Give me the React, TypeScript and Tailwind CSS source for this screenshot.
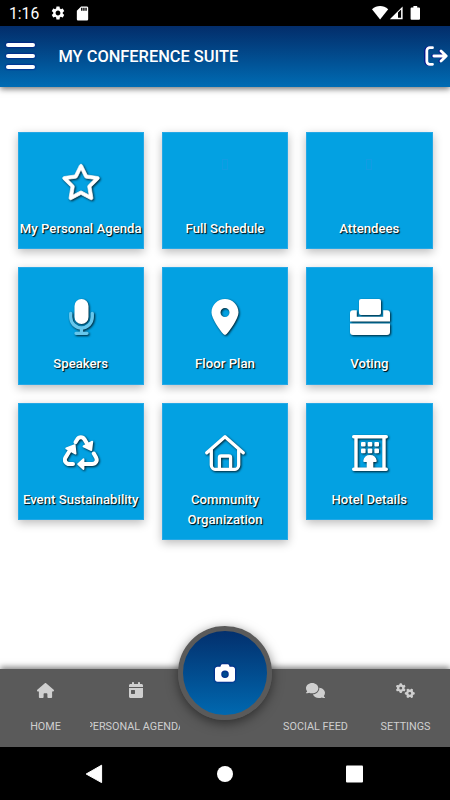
import React from 'react';
import {
  FaCalendarDay,
  FaCamera,
  FaComments,
  FaGears,
  FaHouse,
  FaLocationDot,
  FaRegStar,
} from 'react-icons/fa6';
import { MdSdCard, MdSettings } from 'react-icons/md';

interface Tile {
  label: string;
  icon?: React.ReactNode;
}

const MicrophoneIcon = () => (
  <svg width="25" height="36" viewBox="0 0 25 36" fill="none">
    <path
      d="M1.7 14.5v3.6a10.8 10.8 0 0 0 21.6 0v-3.6M12.5 29v5M7 34.3h11"
      stroke="#66c7ed"
      strokeWidth="3.3"
      strokeLinecap="round"
    />
    <rect x="5.5" y="0" width="14" height="25" rx="7" fill="white" />
  </svg>
);

const VotingIcon = () => (
  <svg width="40" height="36" viewBox="0 0 40 36" fill="white">
    <rect x="9" y="0" width="22" height="16" rx="2" />
    <path d="M3 11.2h3.8v6.6h26.4v-6.6H37a3 3 0 0 1 3 3v8.3H0v-8.3a3 3 0 0 1 3-3Z" />
    <path d="M0 24.4h40V33a3 3 0 0 1-3 3H3a3 3 0 0 1-3-3Z" />
  </svg>
);

const RecycleIcon = () => (
  <svg width="36" height="36" viewBox="0 0 36 36" fill="none">
    <g stroke="white" strokeWidth="4" strokeLinecap="round" strokeLinejoin="round">
      <path d="m12.5 7.3 1.7-2.9c1.7-2.8 5.7-2.8 7.3 0l3.8 6.3" />
      <path d="m30.8 18.6 2.3 4c1.7 3.2-.4 6.5-3.9 6.5H20" />
      <path d="M10 29.1H6.4c-3.5 0-5.6-3.5-3.9-6.5l4.9-8.1" />
    </g>
    <g fill="white" stroke="white" strokeWidth="1.8" strokeLinejoin="round">
      <path d="m29.3 6.6-1 8.5-7.8-3.7Z" />
      <path d="m20.5 24.2-5.4 4.9 5.4 4.9Z" />
      <path d="m3.2 13.4 8.5-3.2.9 8.5Z" />
    </g>
  </svg>
);

const CommunityIcon = () => (
  <svg
    width="40"
    height="36"
    viewBox="0 0 40 36"
    fill="none"
    stroke="white"
    strokeWidth="3.3"
    strokeLinecap="round"
    strokeLinejoin="round"
  >
    <path d="M1.8 17.8 20 1.8l18.2 16M6.3 14.5v15.4a4.5 4.5 0 0 0 4.5 4.5h18.4a4.5 4.5 0 0 0 4.5-4.5V14.5" />
    <path d="M14.4 34V22.7a1.7 1.7 0 0 1 1.7-1.7h7.8a1.7 1.7 0 0 1 1.7 1.7V34" />
  </svg>
);

const HotelIcon = () => (
  <svg width="36" height="36" viewBox="0 0 36 36" fill="white">
    <path
      d="M1.7 1.7h32.6M1.7 34.3h32.6M4 2v32M32 2v32"
      fill="none"
      stroke="white"
      strokeWidth="3.4"
      strokeLinecap="round"
    />
    <rect x="9" y="7" width="4.6" height="4.6" rx="1" />
    <rect x="15.7" y="7" width="4.6" height="4.6" rx="1" />
    <rect x="22.4" y="7" width="4.6" height="4.6" rx="1" />
    <rect x="9" y="13.6" width="4.6" height="4.6" rx="1" />
    <rect x="15.7" y="13.6" width="4.6" height="4.6" rx="1" />
    <rect x="22.4" y="13.6" width="4.6" height="4.6" rx="1" />
    <path d="M12.4 27a1.1 1.1 0 0 1-1.1-1.3 6.8 6.8 0 0 1 13.4 0 1.1 1.1 0 0 1-1.1 1.3h-2.3v7h-6.6v-7Z" />
  </svg>
);

// Faint placeholder for tiles whose icon glyph is missing
const MissingIcon = () => (
  <span className="flex h-[36px] items-start">
    <span className="-mt-[5px] h-[11px] w-[6px] border border-[#129ce3]" />
  </span>
);

const tiles: Tile[] = [
  {
    label: 'My Personal Agenda',
    icon: <FaRegStar size={40} className="stroke-white stroke-[10]" />,
  },
  { label: 'Full Schedule' },
  { label: 'Attendees' },
  { label: 'Speakers', icon: <MicrophoneIcon /> },
  { label: 'Floor Plan', icon: <FaLocationDot size={36} /> },
  { label: 'Voting', icon: <VotingIcon /> },
  { label: 'Event Sustainability', icon: <RecycleIcon /> },
  { label: 'Community Organization', icon: <CommunityIcon /> },
  { label: 'Hotel Details', icon: <HotelIcon /> },
];

const tabs = [
  { label: 'HOME', icon: <FaHouse size={17} /> },
  { label: 'PERSONAL AGENDA', icon: <FaCalendarDay size={16} /> },
  null,
  { label: 'SOCIAL FEED', icon: <FaComments size={19} /> },
  { label: 'SETTINGS', icon: <FaGears size={19} /> },
];

const StatusBar = () => (
  <div className="flex h-[26px] shrink-0 items-center bg-black pl-[9px] text-white">
    <span className="w-[30px] pt-[2px] text-[15.7px] leading-none whitespace-nowrap">1:16</span>
    <MdSettings size={16} className="ml-[11px]" />
    <MdSdCard size={17} className="ml-[8px]" />
    <svg width="49" height="14" viewBox="0 0 49 14" fill="white" className="mr-[29px] ml-auto">
      <path d="M0 3.3C4.8-1 11.4-1 16.2 3.3L8.1 13.5Z" />
      <path d="M17.8 13.3 30.6.6v12.7Z M26 6.5v5.3h3.1V3.5Z" fillRule="evenodd" />
      <path d="M39.6 1.4h1.8V0h3.8v1.4H47a1 1 0 0 1 1 1v10.4a1 1 0 0 1-1 1h-7.4a1 1 0 0 1-1-1V2.4a1 1 0 0 1 1-1Z" />
    </svg>
  </div>
);

const Header = () => (
  <header className="flex h-[61px] shrink-0 items-center bg-linear-to-b from-[#032d6a] to-[#006cb4] text-white shadow-[0_2px_6px_rgba(0,0,0,0.55)]">
    <button className="mb-[2px] ml-[6px] flex h-[26px] w-[29px] flex-col justify-between drop-shadow-[0_0_1px_#00008b]">
      <span className="h-[4px] w-full rounded-full bg-white" />
      <span className="h-[4px] w-full rounded-full bg-white" />
      <span className="h-[4px] w-full rounded-full bg-white" />
    </button>
    <h1 className="ml-[23.5px] pt-px text-[16.4px] leading-5 font-medium whitespace-nowrap">
      MY CONFERENCE SUITE
    </h1>
    <svg
      width="23"
      height="20"
      viewBox="0 0 23 20"
      fill="none"
      stroke="white"
      strokeWidth="2.8"
      strokeLinecap="round"
      strokeLinejoin="round"
      className="mr-[2px] mb-[1px] ml-auto drop-shadow-[-1px_0_0_#00008b]"
    >
      <path d="M7.5 1.7H4.8a3 3 0 0 0-3 3v10.6a3 3 0 0 0 3 3h2.7" />
      <path d="M8.8 10h12M16 4.9l5.2 5.1-5.2 5.1" />
    </svg>
  </header>
);

const TileCard = ({ tile }: { tile: Tile }) => (
  <button className="flex w-full flex-col items-center bg-[#03a1e2] pt-[32px] pb-[10.6px] text-white shadow-[0_3px_9px_rgba(0,0,0,0.27)] outline outline-offset-[-1px] outline-[#5ab5ed]/40">
    {tile.icon ? (
      <span className="flex h-[36px] items-center justify-center pl-px drop-shadow-[1px_1px_1px_rgba(0,0,0,0.8)]">
        {tile.icon}
      </span>
    ) : (
      <MissingIcon />
    )}
    <span className="mt-[19px] text-center text-[13.2px] leading-5 font-medium [text-shadow:1px_1px_1px_#000]">
      {tile.label}
    </span>
  </button>
);

const TabBar = () => (
  <nav className="relative grid h-[78px] shrink-0 grid-cols-5 bg-[#5a5a5a] text-[#cfcfcf] shadow-[0_-2px_6px_rgba(0,0,0,0.5)]">
    {tabs.map((tab, index) =>
      tab ? (
        <button
          key={tab.label}
          className="flex min-w-0 flex-col items-center overflow-hidden pt-[11px]"
        >
          <span className="flex h-[20px] items-center pl-px">{tab.icon}</span>
          <span className="mt-[19px] pl-px text-[10.8px] leading-4 whitespace-nowrap">
            {tab.label}
          </span>
        </button>
      ) : (
        <span key={index} />
      )
    )}
    {/* Camera button sits over the top edge of the bar */}
    <button className="absolute -top-[43px] left-1/2 flex size-[94px] -translate-x-1/2 items-center justify-center rounded-full border-[5px] border-[#5a5a5a] bg-linear-to-b from-[#032d6a] to-[#006cb4] bg-origin-border text-white shadow-[0_3px_12px_rgba(0,0,0,0.5)]">
      <FaCamera size={20} className="drop-shadow-[0_0_1px_#00008b]" />
    </button>
  </nav>
);

const SystemNav = () => (
  <div className="flex h-[53px] shrink-0 items-center bg-black">
    <svg width="450" height="20" viewBox="0 0 450 20" fill="white">
      <path d="M101.6 1.2v17.4L86.2 10Z" stroke="white" strokeLinejoin="round" />
      <circle cx="225" cy="10" r="8" />
      <rect x="346" y="1.5" width="17" height="17" rx="1" />
    </svg>
  </div>
);

export default function App() {
  return (
    <div className="flex h-[800px] w-[450px] flex-col overflow-hidden bg-white font-[Roboto,sans-serif]">
      <StatusBar />
      <Header />
      <main className="grid flex-1 grid-cols-3 content-start items-start gap-x-[18px] gap-y-[18px] px-[17.5px] pt-[44.5px]">
        {/* Last row has one taller tile, so tiles keep their own height */}
        {tiles.map((tile) => (
          <TileCard key={tile.label} tile={tile} />
        ))}
      </main>
      <TabBar />
      <SystemNav />
    </div>
  );
}
